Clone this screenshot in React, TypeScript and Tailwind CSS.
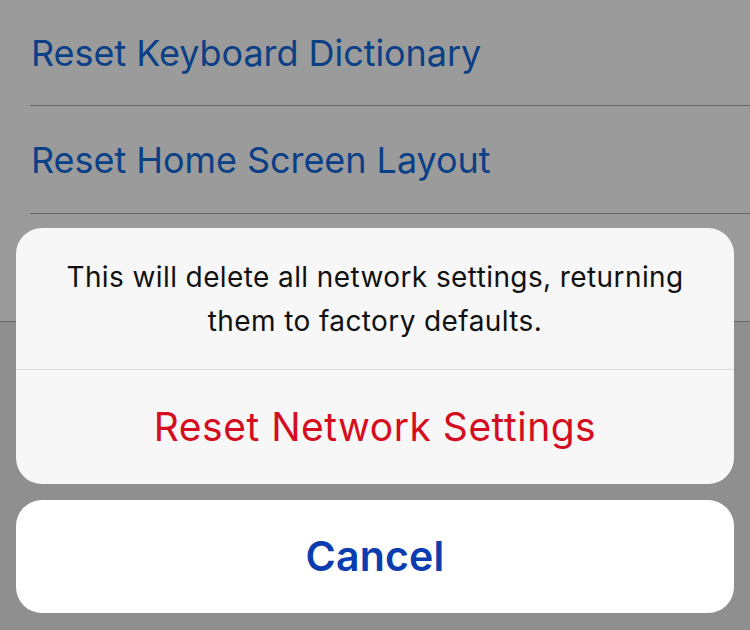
import React from 'react';

const rows = ['Reset Keyboard Dictionary', 'Reset Home Screen Layout'];

const App: React.FC = () => {
  return (
    <div className="relative w-[750px] h-[630px] overflow-hidden bg-[#8f8f8f] font-['Inter','Noto_Sans',sans-serif]">
      {/* settings list behind the dimmed overlay */}
      <div className="bg-[#9b9b9b]">
        <div className="h-[105px] flex items-center pl-[31px] pt-[1px]">
          <span className="text-[36px] tracking-[-0.05px] text-[#0b3f86]">{rows[0]}</span>
        </div>
        <div className="ml-[30px] h-px bg-[#666666]"></div>
        <div className="h-[107px] flex items-center pl-[31px]">
          <span className="text-[36px] tracking-[-0.05px] text-[#0b3f86]">{rows[1]}</span>
        </div>
        <div className="ml-[30px] h-px bg-[#666666]"></div>
        <div className="h-[107px]"></div>
      </div>
      <div className="h-px bg-[#666666]"></div>

      {/* action sheet */}
      <div className="absolute left-[16px] right-[16px] top-[228px] flex flex-col gap-[16px]">
        <div className="rounded-[26px] bg-[#f7f7f7] overflow-hidden">
          <div className="h-[141px] flex flex-col items-center justify-center text-[28px] tracking-[0.4px] leading-[44px] text-[#111111] whitespace-nowrap">
            <span>This will delete all network settings, returning</span>
            <span>them to factory defaults.</span>
          </div>
          <div className="h-px bg-[#d8d8d8]"></div>
          <div className="h-[114px] flex items-center justify-center">
            <span className="text-[39px] tracking-[0.5px] text-[#d50d20]">Reset Network Settings</span>
          </div>
        </div>
        <div className="h-[113px] rounded-[26px] bg-white flex items-center justify-center">
          <span className="text-[41px] font-semibold tracking-[0.2px] text-[#0b3cb0]">Cancel</span>
        </div>
      </div>
    </div>
  );
};

export default App;
